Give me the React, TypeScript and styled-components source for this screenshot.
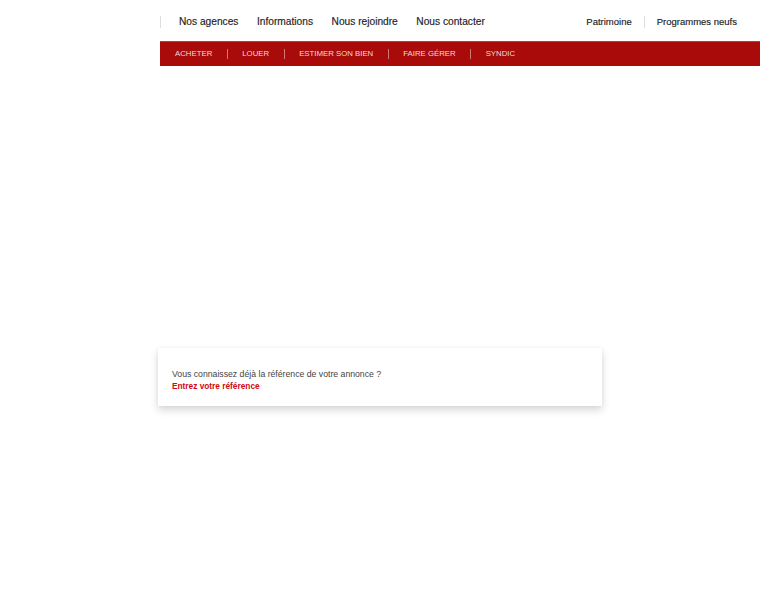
import styled, { createGlobalStyle } from "styled-components";

const GlobalStyle = createGlobalStyle`
  html, body {
    margin: 0;
    padding: 0;
    background: #ffffff;
    font-family: "Liberation Sans", Arial, sans-serif;
  }
`;

const Page = styled.div`
  width: 760px;
  height: 600px;
  display: flex;
  flex-direction: column;
  overflow: hidden;
`;

const Header = styled.header`
  margin-left: 160px;
  display: flex;
  flex-direction: column;
`;

const TopBar = styled.div`
  height: 41px;
  box-sizing: border-box;
  padding: 2px 23px 0 0;
  display: flex;
  align-items: center;
  justify-content: space-between;
`;

const TopLinks = styled.nav`
  display: flex;
  align-items: center;
  gap: 18.5px;
  border-left: 1px solid #dddddd;
  padding-left: 18px;
  height: 12px;
`;

const TopLink = styled.a<{ $size?: number }>`
  font-size: ${(p) => p.$size ?? 10.2}px;
  color: #222222;
  text-decoration: none;
  -webkit-text-stroke: 0.15px #222222;
  line-height: 12px;
`;

const SideLinks = styled.nav`
  display: flex;
  align-items: center;
`;

const SideLink = styled(TopLink)<{ $sep?: boolean }>`
  padding: 0 12px;
  border-left: ${(p) => (p.$sep ? "1px solid #dddddd" : "none")};
  &:last-child {
    padding-right: 0;
  }
`;

const RedBar = styled.nav`
  height: 25px;
  background: #a90a0a;
  border-top: 1px solid #c43a3a;
  box-sizing: border-box;
  display: flex;
  align-items: center;
  padding-left: 0.5px;
`;

const RedItem = styled.a<{ $sep?: boolean }>`
  font-size: 7.8px;
  color: rgba(255, 255, 255, 0.85);
  text-decoration: none;
  padding: 0 14.5px;
  line-height: 10px;
  border-left: ${(p) => (p.$sep ? "1px solid rgba(255,255,255,0.45)" : "none")};
`;

const Body = styled.main`
  flex: 1;
  padding-top: 282px;
  padding-left: 158px;
`;

const Card = styled.section`
  width: 444px;
  height: 58px;
  box-sizing: border-box;
  background: #ffffff;
  box-shadow: 0 4px 8px rgba(0, 0, 0, 0.16), 0 0 3px rgba(0, 0, 0, 0.05);
  padding: 20px 14px 0;
  display: flex;
  flex-direction: column;
`;

const Question = styled.p`
  margin: 0;
  font-size: 8.7px;
  line-height: 12px;
  color: #444444;
`;

const RefLink = styled.a`
  font-size: 8.3px;
  line-height: 12px;
  font-weight: 700;
  color: #cc0a10;
  text-decoration: none;
`;

const topLinks = ["Nos agences", "Informations", "Nous rejoindre", "Nous contacter"];
const redLinks = ["ACHETER", "LOUER", "ESTIMER SON BIEN", "FAIRE GÉRER", "SYNDIC"];

const App = () => {
  return (
    <Page>
      <GlobalStyle />
      <Header>
        <TopBar>
          <TopLinks>
            {topLinks.map((label) => (
              <TopLink key={label} href="#">
                {label}
              </TopLink>
            ))}
          </TopLinks>
          <SideLinks>
            <SideLink href="#" $size={9.5}>
              Patrimoine
            </SideLink>
            <SideLink href="#" $size={9.5} $sep>
              Programmes neufs
            </SideLink>
          </SideLinks>
        </TopBar>

        {/* Main red menu */}
        <RedBar>
          {redLinks.map((label, i) => (
            <RedItem key={label} href="#" $sep={i > 0}>
              {label}
            </RedItem>
          ))}
        </RedBar>
      </Header>

      <Body>
        <Card>
          <Question>Vous connaissez déjà la référence de votre annonce ?</Question>
          <RefLink href="#">Entrez votre référence</RefLink>
        </Card>
      </Body>
    </Page>
  );
};

export default App;
